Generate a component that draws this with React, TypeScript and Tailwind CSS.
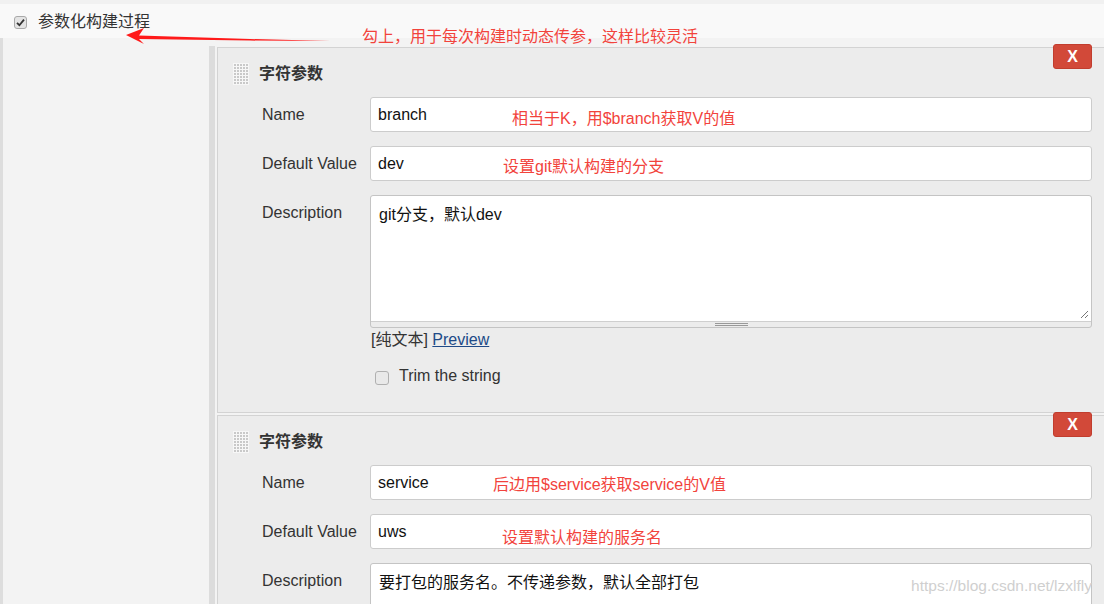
import React from "react";

const font = '"Liberation Sans", "Noto Sans CJK SC", Arial, sans-serif';

function DragHandle() {
  const dots = [];
  for (let r = 0; r < 7; r++) {
    for (let c = 0; c < 5; c++) {
      dots.push(<rect key={`${r}-${c}`} x={1 + c * 3} y={1 + r * 3} width="2" height="2" fill="#c9c9c9" />);
    }
  }
  return (
    <svg width="16" height="22" viewBox="0 0 16 22" className="shrink-0">
      <rect x="0" y="0" width="16" height="22" fill="#f7f7f7" />
      {dots}
    </svg>
  );
}

function Field({ label, value }: { label: string; value: string }) {
  return (
    <div className="flex items-start">
      <div className="w-[108px] h-[35px] flex items-center text-[16px] text-[#333]">{label}</div>
      <div className="flex-1 h-[35px] bg-white border border-[#cccccc] rounded-[3px] flex items-center pl-[7px] text-[16px] text-[#111]">
        {value}
      </div>
    </div>
  );
}

function DescField({ value }: { value: string }) {
  return (
    <div className="flex items-start">
      <div className="w-[108px] h-[35px] flex items-center text-[16px] text-[#333]">Description</div>
      <div className="flex-1 border border-[#c4c4c4] rounded-[3px] bg-[#ececec]">
        <div className="relative h-[126px] bg-white border-b border-[#cfcfcf] rounded-t-[3px] px-[8px] pt-[9px] text-[16px] leading-[20px] text-[#111]">
          {value}
          <svg width="10" height="10" viewBox="0 0 10 10" className="absolute right-[2px] bottom-[2px]">
            <line x1="2" y1="9" x2="9" y2="2" stroke="#777" strokeWidth="1" />
            <line x1="6" y1="9" x2="9" y2="6" stroke="#777" strokeWidth="1" />
          </svg>
        </div>
        <div className="h-[5px] flex items-center justify-center">
          <div className="w-[33px] h-[3px] border-t border-b border-[#999]" />
        </div>
      </div>
    </div>
  );
}

function RemoveButton() {
  return (
    <div className="absolute top-[-4px] right-[12px] w-[39px] h-[25px] bg-[#d24939] border border-[#c13d2e] rounded-[3px] flex items-center justify-center text-white font-bold text-[16px]">
      X
    </div>
  );
}

export default function App() {
  return (
    <div className="relative w-[1104px] h-[604px] overflow-hidden bg-[#f3f3f3]" style={{ fontFamily: font }}>
      {/* top bar with checkbox */}
      <div className="h-[4px] bg-[#f1f1f1]" />
      <div className="h-[34px] bg-[#f9f9f9] flex items-center pl-[14px] pt-[2px]">
        <div className="w-[13px] h-[13px] rounded-[3px] border border-[#a9a9a9] bg-[#e4e4e4] flex items-center justify-center">
          <svg width="9" height="9" viewBox="0 0 9 9">
            <path d="M1 4.8 L3.4 7.2 L8 1.6" stroke="#333" strokeWidth="1.8" fill="none" />
          </svg>
        </div>
        <span className="ml-[11px] text-[16px] text-[#333]">参数化构建过程</span>
      </div>

      <div className="flex h-[566px]">
        <div className="w-[3px] bg-[#dddddd]" />
        <div className="w-[206px]" />
        <div className="w-[6px] mt-[8px] bg-[#dcdcdc]" />
        <div className="w-[2px]" />
        <div className="flex-1 pt-[9px] flex flex-col gap-[2px]">
          {/* panel 1 */}
          <div className="relative bg-[#ececec] border-t border-l border-b border-[#d3d3d3] pt-[15px] pb-[26px] pr-[12px]">
            <RemoveButton />
            <div className="flex items-center h-[22px] pl-[15px]">
              <DragHandle />
              <span className="ml-[10px] text-[16px] font-bold text-[#333]">字符参数</span>
            </div>
            <div className="pl-[44px] mt-[12px] flex flex-col gap-[14px]">
              <Field label="Name" value="branch" />
              <Field label="Default Value" value="dev" />
              <DescField value="git分支，默认dev" />
            </div>
            <div className="pl-[153px] mt-[2px] text-[16px] leading-[20px] text-[#333]">
              [纯文本] <span className="text-[#204a87] underline">Preview</span>
            </div>
            <div className="pl-[157px] mt-[16px] flex items-center h-[20px]">
              <div className="w-[14px] h-[14px] mt-[4px] rounded-[3px] border border-[#b0b0b0] bg-[#e9e9e9]" />
              <span className="ml-[10px] text-[16px] text-[#333]">Trim the string</span>
            </div>
          </div>

          {/* panel 2 */}
          <div className="relative flex-1 bg-[#ececec] border-t border-l border-[#d3d3d3] pt-[15px] pr-[12px]">
            <RemoveButton />
            <div className="flex items-center h-[22px] pl-[15px]">
              <DragHandle />
              <span className="ml-[10px] text-[16px] font-bold text-[#333]">字符参数</span>
            </div>
            <div className="pl-[44px] mt-[12px] flex flex-col gap-[14px]">
              <Field label="Name" value="service" />
              <Field label="Default Value" value="uws" />
              <DescField value="要打包的服务名。不传递参数，默认全部打包" />
            </div>
          </div>
        </div>
      </div>

      {/* annotations */}
      <svg className="absolute left-0 top-0" width="400" height="60" viewBox="0 0 400 60">
        <polygon points="126,35 144,28 139,35.5 250,39 330,41 250,40.6 139,39 144,44" fill="#ff1a1a" />
      </svg>
      <div className="absolute left-[362px] top-[27px] text-[16px] leading-[20px] text-[#f2433c]">勾上，用于每次构建时动态传参，这样比较灵活</div>
      <div className="absolute left-[512px] top-[109px] text-[16px] leading-[20px] text-[#f2433c]">相当于K，用$branch获取V的值</div>
      <div className="absolute left-[503px] top-[157px] text-[16px] leading-[20px] text-[#f2433c]">设置git默认构建的分支</div>
      <div className="absolute left-[493px] top-[475px] text-[16px] leading-[20px] text-[#f2433c]">后边用$service获取service的V值</div>
      <div className="absolute left-[502px] top-[528px] text-[16px] leading-[20px] text-[#f2433c]">设置默认构建的服务名</div>
      <div className="absolute right-[12px] top-[576px] text-[15.5px] leading-[20px] text-[#cfcfcf]">https://blog.csdn.net/lzxlfly</div>
    </div>
  );
}
